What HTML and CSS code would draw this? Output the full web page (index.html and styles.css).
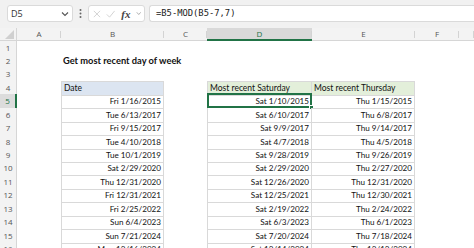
FILE: index.html
```html
<!DOCTYPE html>
<html lang="en">
<head>
  <meta charset="UTF-8">
  <title>Get most recent day of week</title>
  <link rel="stylesheet" href="styles.css">
</head>
<body>
  <div class="toolbar">
    <div class="namebox">
      <span>D5</span>
      <svg class="chev" width="8" height="6" viewBox="0 0 8 6"><path d="M1 1.5 L4 4.5 L7 1.5" fill="none" stroke="#555" stroke-width="1.1"/></svg>
    </div>
    <svg class="dots" width="3" height="11" viewBox="0 0 3 11"><circle cx="1.5" cy="2" r="1" fill="#666"/><circle cx="1.5" cy="5.5" r="1" fill="#666"/><circle cx="1.5" cy="9" r="1" fill="#666"/></svg>
    <div class="fxbox">
      <svg width="10" height="10" viewBox="0 0 10 10"><path d="M1 1 L9 9 M9 1 L1 9" stroke="#c8c8c8" stroke-width="1"/></svg>
      <svg width="12" height="10" viewBox="0 0 12 10"><path d="M1 5.5 L4.5 9 L11 1" fill="none" stroke="#c8c8c8" stroke-width="1"/></svg>
      <span class="fx">fx</span>
      <svg width="7" height="5" viewBox="0 0 7 5"><path d="M1 1 L3.5 3.8 L6 1" fill="none" stroke="#999" stroke-width="1"/></svg>
    </div>
    <div class="formula">=B5-MOD(B5-7,7)</div>
  </div>

  <div class="sheet">
    <div class="row colhead">
      <div class="corner"><svg width="9" height="9" viewBox="0 0 9 9"><path d="M9 0 L9 9 L0 9 Z" fill="#d0d0d0"/></svg></div>
      <div class="ch">A</div>
      <div class="ch">B</div>
      <div class="ch">C</div>
      <div class="ch sel">D</div>
      <div class="ch">E</div>
      <div class="ch">F</div>
      <div class="ch"></div>
    </div>

    <div class="row"><div class="rh">1</div></div>
    <div class="row"><div class="rh">2</div><div></div><div class="title">Get most recent day of week</div></div>
    <div class="row"><div class="rh">3</div></div>
    <div class="row">
      <div class="rh">4</div><div></div>
      <div class="c hd blue first">Date</div><div></div>
      <div class="c hd green first">Most recent Saturday</div>
      <div class="c hd green">Most recent Thursday</div>
    </div>
    <div class="row">
      <div class="rh sel">5</div><div></div>
      <div class="c first">Fri 1/16/2015</div><div></div>
      <div class="c first active">Sat 1/10/2015<span class="handle"></span></div>
      <div class="c">Thu 1/15/2015</div>
    </div>
    <div class="row">
      <div class="rh">6</div><div></div>
      <div class="c first">Tue 6/13/2017</div><div></div>
      <div class="c first">Sat 6/10/2017</div>
      <div class="c">Thu 6/8/2017</div>
    </div>
    <div class="row">
      <div class="rh">7</div><div></div>
      <div class="c first">Fri 9/15/2017</div><div></div>
      <div class="c first">Sat 9/9/2017</div>
      <div class="c">Thu 9/14/2017</div>
    </div>
    <div class="row">
      <div class="rh">8</div><div></div>
      <div class="c first">Tue 4/10/2018</div><div></div>
      <div class="c first">Sat 4/7/2018</div>
      <div class="c">Thu 4/5/2018</div>
    </div>
    <div class="row">
      <div class="rh">9</div><div></div>
      <div class="c first">Tue 10/1/2019</div><div></div>
      <div class="c first">Sat 9/28/2019</div>
      <div class="c">Thu 9/26/2019</div>
    </div>
    <div class="row">
      <div class="rh">10</div><div></div>
      <div class="c first">Sat 2/29/2020</div><div></div>
      <div class="c first">Sat 2/29/2020</div>
      <div class="c">Thu 2/27/2020</div>
    </div>
    <div class="row">
      <div class="rh">11</div><div></div>
      <div class="c first">Thu 12/31/2020</div><div></div>
      <div class="c first">Sat 12/26/2020</div>
      <div class="c">Thu 12/31/2020</div>
    </div>
    <div class="row">
      <div class="rh">12</div><div></div>
      <div class="c first">Fri 12/31/2021</div><div></div>
      <div class="c first">Sat 12/25/2021</div>
      <div class="c">Thu 12/30/2021</div>
    </div>
    <div class="row">
      <div class="rh">13</div><div></div>
      <div class="c first">Fri 2/25/2022</div><div></div>
      <div class="c first">Sat 2/19/2022</div>
      <div class="c">Thu 2/24/2022</div>
    </div>
    <div class="row">
      <div class="rh">14</div><div></div>
      <div class="c first">Sun 6/4/2023</div><div></div>
      <div class="c first">Sat 6/3/2023</div>
      <div class="c">Thu 6/1/2023</div>
    </div>
    <div class="row">
      <div class="rh">15</div><div></div>
      <div class="c first">Sun 7/21/2024</div><div></div>
      <div class="c first">Sat 7/20/2024</div>
      <div class="c">Thu 7/18/2024</div>
    </div>
    <div class="row">
      <div class="rh">16</div><div></div>
      <div class="c first">Mon 12/16/2024</div><div></div>
      <div class="c first">Sat 12/14/2024</div>
      <div class="c">Thu 12/12/2024</div>
    </div>
  </div>
</body>
</html>
```

FILE: styles.css
```css
* { box-sizing: border-box; }

html, body {
  margin: 0;
  padding: 0;
  overflow: hidden;
  background: #fff;
}

body {
  width: 474px;
  height: 248px;
  font-family: Lato, "Liberation Sans", sans-serif;
}

/* formula bar */
.toolbar {
  height: 28px;
  background: #f1f1f1;
  display: flex;
  align-items: flex-start;
  padding: 5px 0 0 7px;
}

.namebox {
  width: 66px;
  height: 17px;
  background: #fff;
  border: 1px solid #dadada;
  border-radius: 3px;
  display: flex;
  align-items: center;
  justify-content: space-between;
  padding: 0 3px;
  font-family: "Open Sans", sans-serif;
  font-size: 9px;
  color: #333;
}

.chev { margin-top: 1px; }

.dots {
  margin: 3px 6px 0 6px;
}

.fxbox {
  width: 57px;
  height: 17px;
  background: #fff;
  border: 1px solid #dadada;
  border-radius: 3px;
  display: flex;
  align-items: center;
  gap: 5px;
  padding: 0 3px 0 4px;
}

.fx {
  font-family: "Liberation Serif", serif;
  font-style: italic;
  font-weight: bold;
  font-size: 11px;
  color: #444;
  margin-left: 1px;
}

.formula {
  flex: 1;
  height: 17px;
  margin-left: 4px;
  background: #fff;
  border: 1px solid #dadada;
  border-right: none;
  border-radius: 3px 0 0 3px;
  font-family: "DejaVu Sans Mono", monospace;
  font-size: 8.8px;
  line-height: 15px;
  padding-left: 6px;
  color: #222;
}

/* grid */
.row {
  display: grid;
  grid-template-columns: 17px 44px 103px 43px 105px 103px 44px 1fr;
  height: 13.45px;
}

.colhead {
  height: 12.5px;
  background: #f3f3f3;
  border-bottom: 1px solid #d6d6d6;
}

.corner {
  display: flex;
  align-items: flex-end;
  justify-content: flex-end;
  padding: 0 2px 1px 0;
  border-right: 1px solid #d6d6d6;
}

.ch {
  position: relative;
  text-align: center;
  font-family: "Open Sans", sans-serif;
  font-size: 8px;
  line-height: 11px;
  color: #555;
}

.ch::after {
  content: "";
  position: absolute;
  right: 0;
  top: 3px;
  bottom: 2px;
  width: 1px;
  background: #d3d3d3;
}

.ch.sel {
  background: #d9d9d9;
  color: #217346;
  border-bottom: 2px solid #217346;
  height: 12.5px;
  margin-bottom: -1px;
}

.rh {
  background: #f3f3f3;
  border-right: 1px solid #d6d6d6;
  text-align: center;
  font-family: "Open Sans", sans-serif;
  font-size: 8px;
  line-height: 13px;
  color: #555;
}

.rh.sel {
  background: #dcdcdc;
  color: #217346;
  border-right: 2px solid #217346;
}

.title {
  grid-column: 3 / 6;
  font-weight: bold;
  font-size: 9.3px;
  line-height: 13px;
  padding-left: 2px;
  color: #111;
  white-space: nowrap;
}

/* table cells */
.c {
  position: relative;
  border-right: 1px solid #d9d9d9;
  border-bottom: 1px solid #d9d9d9;
  font-size: 8.1px;
  line-height: 14px;
  text-align: right;
  padding: 0 2px;
  color: #111;
  white-space: nowrap;
}

.c.first { border-left: 1px solid #d9d9d9; }

.c.hd {
  border-top: 1px solid #d9d9d9;
  text-align: left;
  font-size: 8.5px;
  line-height: 13px;
}

.c.blue { background: #dce5f1; }
.c.green { background: #e3efda; }

.c.active {
  border: 2px solid #217346;
  line-height: 12px;
  padding-right: 1px;
  margin-top: -1px;
  height: 14.45px;
}

.handle {
  position: absolute;
  right: -4px;
  bottom: -4px;
  width: 5px;
  height: 5px;
  background: #217346;
  border: 1px solid #fff;
}
```
